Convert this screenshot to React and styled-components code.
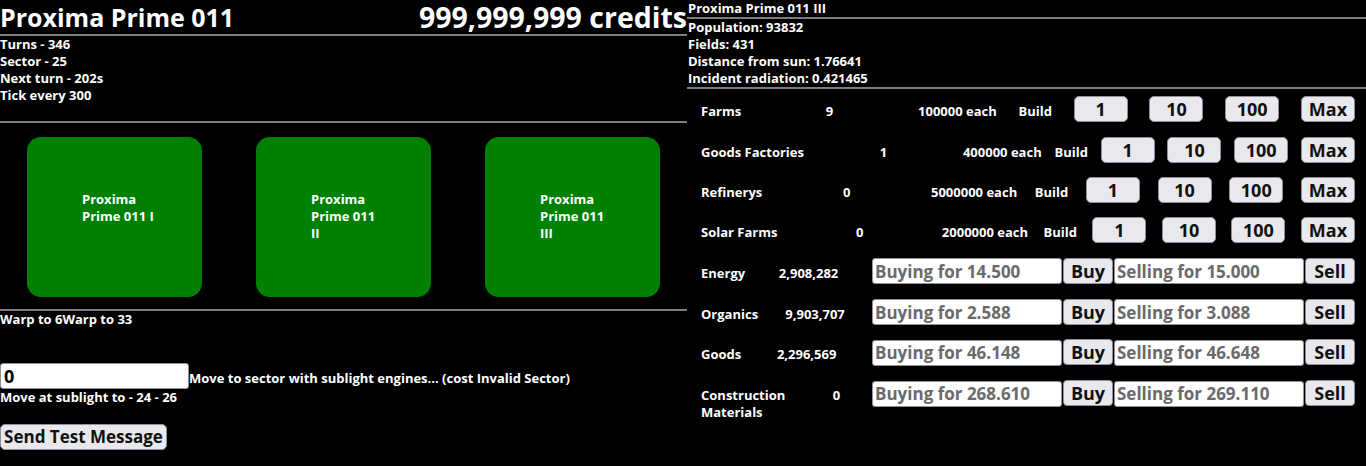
import React from "react";
import styled, { createGlobalStyle } from "styled-components";

const FONT = `"Open Sans", "Noto Sans", "DejaVu Sans", sans-serif`;

const GlobalStyle = createGlobalStyle`
  html, body { margin: 0; padding: 0; background: #000; }
  body {
    color: #fff;
    font-family: ${FONT};
    font-weight: 700;
    font-size: 13px;
    line-height: 17px;
  }
  * { box-sizing: border-box; }
`;

const Page = styled.div`
  display: grid;
  grid-template-columns: 687px 1fr;
  width: 1366px;
  min-height: 466px;
  background: #000;
`;

const Column = styled.section`
  display: flex;
  flex-direction: column;
  min-width: 0;
`;

const Rule = styled.hr`
  margin: 0;
  border: 0;
  height: 2px;
  background: #7d7d7d;
  flex: none;
`;

const Header = styled.header`
  display: flex;
  justify-content: space-between;
  align-items: flex-end;
  height: 34px;
`;

const BigText = styled.h1`
  margin: 0;
  font-size: ${(p) => p.$size || 26}px;
  line-height: 34px;
  font-weight: 700;
  white-space: nowrap;
`;

const StatList = styled.div`
  display: flex;
  flex-direction: column;
  padding-left: ${(p) => (p.$inset ? "1px" : "0")};
  padding-bottom: ${(p) => (p.$spaced ? "17px" : "0")};
`;

const Line = styled.div`
  font-size: 13px;
  line-height: 17px;
  white-space: nowrap;
  padding-left: ${(p) => (p.$inset ? "1px" : "0")};
`;

const CardRow = styled.div`
  display: flex;
  justify-content: space-around;
  padding: 14px 0 12px;
`;

const PlanetCard = styled.div`
  width: 175px;
  height: 160px;
  padding: 54px 47px 0 55px;
  background: #008000;
  border-radius: 14px;
  font-size: 13px;
  line-height: 17px;
  color: #fff;
`;

const MoveRow = styled.div`
  display: flex;
  align-items: baseline;
  margin-top: 35px;
`;

const SectorInput = styled.input`
  width: 189px;
  height: 26px;
  margin: 0;
  padding: 0 3px;
  border: 1px solid #8f8f9d;
  border-radius: 3px;
  background: #fff;
  color: #000;
  font-family: ${FONT};
  font-weight: 700;
  font-size: 18px;
`;

const GreyButton = styled.button`
  height: 26px;
  margin: 0;
  padding: 0 4px;
  border: 1px solid #8f8f9d;
  border-radius: 5px;
  background: #e9e9ed;
  color: #111;
  font-family: ${FONT};
  font-weight: 700;
  font-size: 18px;
  line-height: 24px;
  white-space: nowrap;
  cursor: pointer;
`;

const SendButton = styled(GreyButton)`
  align-self: flex-start;
  margin-top: 18px;
  width: 167px;
  padding: 0 2px;
  font-size: 17px;
`;

const BuildButton = styled(GreyButton)`
  width: 54px;
  flex: none;
`;

const TradeButton = styled(GreyButton)`
  width: 50px;
  flex: 0 1 auto;
  padding: 0 2px;
  border-radius: 4px;
`;

const Row = styled.div`
  display: flex;
  justify-content: space-between;
  align-items: baseline;
  padding: 7.2px 11px 7.2px 14px;
  font-size: 13px;
  line-height: 17px;
`;

const Name = styled.span`
  max-width: ${(p) => (p.$narrow ? "100px" : "none")};
`;

const Count = styled.span`
  margin: 0 ${(p) => p.$gap}px;
  white-space: nowrap;
`;

const Cell = styled.span`
  white-space: nowrap;
`;

const TradeGroup = styled.div`
  display: flex;
  align-items: baseline;
  gap: 1px;
  flex: 0 1 auto;
  min-width: 0;
`;

const PriceInput = styled.input`
  width: 190px;
  height: 26px;
  flex: none;
  margin: 0;
  padding: 0 2px;
  border: 1px solid #8f8f9d;
  border-radius: 3px;
  background: #fff;
  font-family: ${FONT};
  font-weight: 700;
  font-size: 17px;
  color: #000;
  &::placeholder { color: #6a6a6a; opacity: 1; }
`;

const builds = [
  { name: "Farms", count: "9", cost: "100000" },
  { name: "Goods Factories", count: "1", cost: "400000" },
  { name: "Refinerys", count: "0", cost: "5000000" },
  { name: "Solar Farms", count: "0", cost: "2000000" },
];

const market = [
  { name: "Energy", count: "2,908,282", buy: "14.500", sell: "15.000" },
  { name: "Organics", count: "9,903,707", buy: "2.588", sell: "3.088" },
  { name: "Goods", count: "2,296,569", buy: "46.148", sell: "46.648" },
  { name: "Construction Materials", count: "0", buy: "268.610", sell: "269.110" },
];

const planets = ["Proxima Prime 011 I", "Proxima Prime 011 II", "Proxima Prime 011 III"];

export default function App() {
  return (
    <>
      <GlobalStyle />
      <Page>
        <Column>
          <Header>
            <BigText $size={25}>Proxima Prime 011</BigText>
            <BigText as="div" $size={28.5}>999,999,999 credits</BigText>
          </Header>
          <Rule />
          <StatList $spaced>
            <Line>Turns - 346</Line>
            <Line>Sector - 25</Line>
            <Line>Next turn - 202s</Line>
            <Line>Tick every 300</Line>
          </StatList>
          <Rule />
          <CardRow>
            {planets.map((p) => (
              <PlanetCard key={p}>{p}</PlanetCard>
            ))}
          </CardRow>
          <Rule />
          <Line>
            <span>Warp to 6</span>
            <span>Warp to 33</span>
          </Line>
          <MoveRow>
            <SectorInput defaultValue="0" />
            <Line as="span">Move to sector with sublight engines... (cost Invalid Sector)</Line>
          </MoveRow>
          <Line>Move at sublight to - 24 - 26</Line>
          <SendButton>Send Test Message</SendButton>
        </Column>
        <Column>
          <Line $inset>Proxima Prime 011 III</Line>
          <Rule />
          <StatList $inset>
            <Line>Population: 93832</Line>
            <Line>Fields: 431</Line>
            <Line>Distance from sun: 1.76641</Line>
            <Line>Incident radiation: 0.421465</Line>
          </StatList>
          <Rule />
          {builds.map((b) => (
            <Row key={b.name}>
              <Name>{b.name}</Name>
              <Count $gap={63}>{b.count}</Count>
              <Cell>{b.cost} each</Cell>
              <Cell>Build</Cell>
              <BuildButton>1</BuildButton>
              <BuildButton>10</BuildButton>
              <BuildButton>100</BuildButton>
              <BuildButton>Max</BuildButton>
            </Row>
          ))}
          {market.map((m) => (
            <Row key={m.name}>
              <Name $narrow>{m.name}</Name>
              <Count $gap={0}>{m.count}</Count>
              <TradeGroup>
                <PriceInput placeholder={`Buying for ${m.buy}`} />
                <TradeButton>Buy</TradeButton>
                <PriceInput placeholder={`Selling for ${m.sell}`} />
                <TradeButton>Sell</TradeButton>
              </TradeGroup>
            </Row>
          ))}
        </Column>
      </Page>
    </>
  );
}
